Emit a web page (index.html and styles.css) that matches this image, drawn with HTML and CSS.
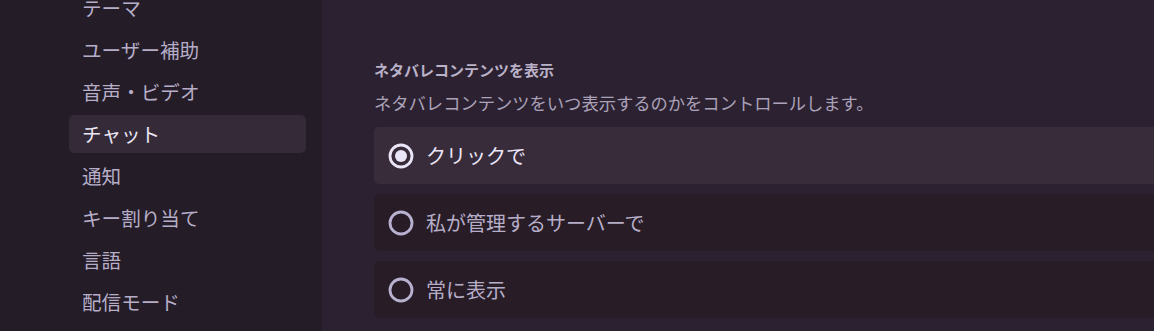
FILE: index.html
```html
<!DOCTYPE html>
<html lang="ja">
<head>
  <meta charset="UTF-8">
  <title>設定 - チャット</title>
  <link rel="stylesheet" href="styles.css">
</head>
<body>
  <div class="settings">
    <nav class="sidebar">
      <ul class="nav-list">
        <li class="nav-item">テーマ</li>
        <li class="nav-item">ユーザー補助</li>
        <li class="nav-item">音声・ビデオ</li>
        <li class="nav-item selected">チャット</li>
        <li class="nav-item">通知</li>
        <li class="nav-item">キー割り当て</li>
        <li class="nav-item">言語</li>
        <li class="nav-item">配信モード</li>
      </ul>
    </nav>

    <main class="content">
      <h2 class="section-title">ネタバレコンテンツを表示</h2>
      <p class="section-desc">ネタバレコンテンツをいつ表示するのかをコントロールします。</p>

      <div class="radio-group">
        <div class="radio-option checked">
          <svg class="radio-icon" width="26" height="26" viewBox="0 0 26 26">
            <circle cx="13" cy="13" r="11" fill="none" stroke="currentColor" stroke-width="2.8"/>
            <circle cx="13" cy="13" r="6" fill="currentColor"/>
          </svg>
          <span class="radio-label">クリックで</span>
        </div>
        <div class="radio-option">
          <svg class="radio-icon" width="26" height="26" viewBox="0 0 26 26">
            <circle cx="13" cy="13" r="11" fill="none" stroke="currentColor" stroke-width="2.8"/>
          </svg>
          <span class="radio-label">私が管理するサーバーで</span>
        </div>
        <div class="radio-option">
          <svg class="radio-icon" width="26" height="26" viewBox="0 0 26 26">
            <circle cx="13" cy="13" r="11" fill="none" stroke="currentColor" stroke-width="2.8"/>
          </svg>
          <span class="radio-label">常に表示</span>
        </div>
      </div>
    </main>
  </div>
</body>
</html>
```

FILE: styles.css
```css
body {
  margin: 0;
  font-family: 'Noto Sans CJK JP', 'Noto Sans', sans-serif;
  background: #2c2131;
  color: #b6aec8;
  height: 331px;
  overflow: hidden;
}

.settings {
  display: flex;
  height: 100%;
}

.sidebar {
  width: 322px;
  flex-shrink: 0;
  background: #241c26;
  padding: 0 16px 0 69px;
  box-sizing: border-box;
}

.nav-list {
  list-style: none;
  margin: -11px 0 0;
  padding: 0;
}

.nav-item {
  height: 38px;
  line-height: 38px;
  padding: 0 13px;
  margin-bottom: 4px;
  border-radius: 5px;
  font-size: 19.6px;
  color: #b6aec8;
  white-space: nowrap;
}

.nav-item.selected {
  background: #342a38;
  color: #ece7f6;
}

.content {
  flex: 1;
  padding: 60px 0 0 52px;
  min-width: 0;
}

.section-title {
  margin: 0 0 10px;
  font-size: 15px;
  line-height: 20px;
  font-weight: 700;
  color: #bab2c8;
}

.section-desc {
  margin: 0 0 12px;
  font-size: 17.3px;
  line-height: 25px;
  color: #aaa2b9;
  white-space: nowrap;
}

.radio-group {
  display: flex;
  flex-direction: column;
  gap: 10px;
  margin-right: -20px;
}

.radio-option {
  display: flex;
  align-items: center;
  gap: 12px;
  height: 57px;
  padding: 0 14px;
  border-radius: 5px;
  background: #281d27;
  font-size: 20px;
  color: #b6aec8;
}

.radio-option.checked {
  background: #382c3b;
  color: #ebe6f7;
}

.radio-icon {
  flex-shrink: 0;
  color: #b9b1d0;
}

.radio-option.checked .radio-icon {
  color: #ebe6f7;
}
```
